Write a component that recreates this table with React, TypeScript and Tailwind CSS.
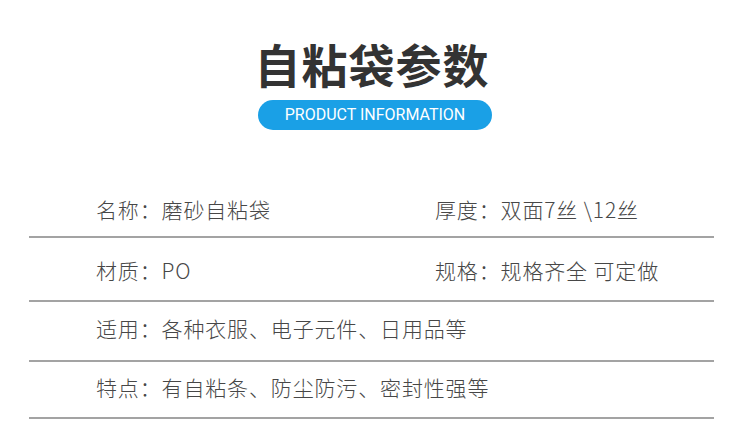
import React from "react";

const font = { fontFamily: '"Noto Sans CJK SC", "Noto Sans", sans-serif' };

type Row = { a: string; b?: string; cls: string };

export default function App() {
  const rows: Row[] = [
    { a: "名称：磨砂自粘袋", b: "厚度：双面7丝 \\12丝", cls: "h-[60px] pt-[17px]" },
    { a: "材质：PO", b: "规格：规格齐全 可定做", cls: "h-[64px] pt-[18px]" },
    { a: "适用：各种衣服、电子元件、日用品等", cls: "h-[60px] pt-[12px]" },
    { a: "特点：有自粘条、防尘防污、密封性强等", cls: "h-[57px] pt-[11px]" },
  ];
  return (
    <div className="w-[750px] h-[435px] bg-white overflow-hidden" style={font}>
      <div className="flex flex-col items-center pt-[37px]">
        <div className="text-[46px] leading-[52px] font-bold text-[#333333] tracking-[1px] ml-[-6px]">自粘袋参数</div>
        <div className="mt-[11px] w-[234px] h-[30px] rounded-full bg-[#1aa0e6] flex items-center justify-center text-white text-[16px]" style={{ fontFamily: 'Roboto, "Noto Sans", sans-serif' }}>
          PRODUCT INFORMATION
        </div>
      </div>
      <div className="ml-[29px] w-[685px] mt-[48px]">
        {rows.map((r, i) => (
          <div key={i} className={`box-border border-b-2 border-[#a3a3a3] flex items-start pl-[67px] text-[21px] leading-[28px] font-light tracking-[0.85px] text-[#474747] whitespace-nowrap ${r.cls}`}>
            <div className="w-[339px] shrink-0">{r.a}</div>
            {r.b && <div>{r.b}</div>}
          </div>
        ))}
      </div>
    </div>
  );
}
